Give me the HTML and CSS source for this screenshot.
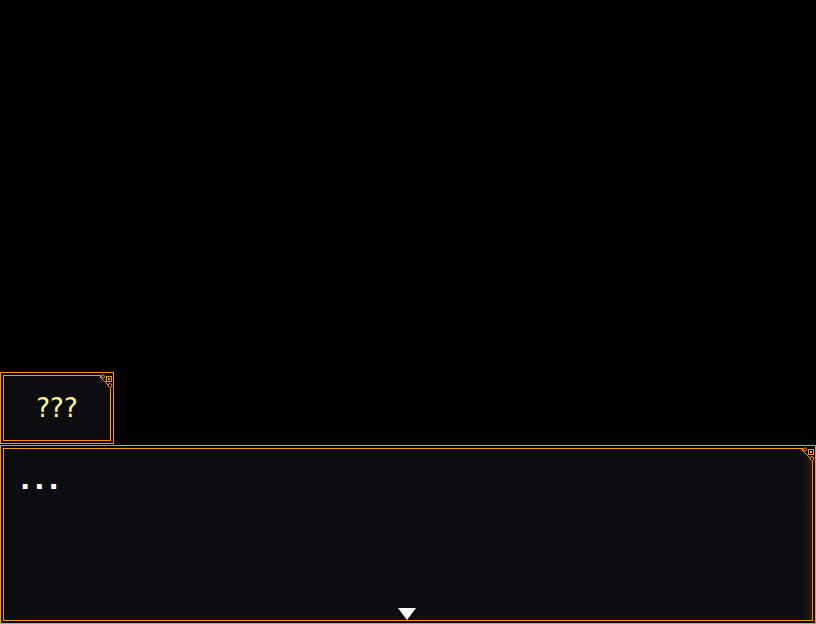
FILE: index.html
```html
<!DOCTYPE html>
<html>
<head>
<meta charset="utf-8">
<link rel="stylesheet" href="styles.css">
</head>
<body>
<div class="screen">
  <div class="frame namebox">
    <div class="panel name-panel">
      <span class="name">???</span>
      <svg class="orn" width="16" height="17" viewBox="0 0 16 17" shape-rendering="crispEdges">
        <polygon points="4,0 16,0 16,15 12,15 3,3" fill="#000"/>
        <g fill="#ff9900">
          <rect x="2" y="1" width="2" height="1"/>
          <rect x="3" y="2" width="1" height="2"/>
          <rect x="4" y="4" width="1" height="1"/>
          <rect x="5" y="5" width="1" height="1"/>
          <rect x="6" y="6" width="1" height="1"/>
          <rect x="7" y="7" width="1" height="1"/>
          <rect x="8" y="8" width="1" height="1"/>
          <rect x="9" y="9" width="1" height="1"/>
          <rect x="10" y="10" width="1" height="1"/>
          <rect x="11" y="4" width="2" height="2"/>
          <rect x="13" y="14" width="1" height="3"/>
        </g>
        <circle cx="6" cy="2.5" r="1.6" fill="none" stroke="#ff9900" shape-rendering="auto"/>
        <rect x="9.5" y="2.5" width="5" height="5" fill="none" stroke="#ff9900"/>
        <circle cx="13" cy="11.5" r="1.9" fill="none" stroke="#ff9900" shape-rendering="auto"/>
      </svg>
    </div>
  </div>
  <div class="frame msgbox">
    <div class="panel msg-panel">
      <p class="msg">...</p>
      <svg class="orn" width="16" height="17" viewBox="0 0 16 17" shape-rendering="crispEdges">
        <polygon points="4,0 16,0 16,15 12,15 3,3" fill="#000"/>
        <g fill="#ff9900">
          <rect x="2" y="1" width="2" height="1"/>
          <rect x="3" y="2" width="1" height="2"/>
          <rect x="4" y="4" width="1" height="1"/>
          <rect x="5" y="5" width="1" height="1"/>
          <rect x="6" y="6" width="1" height="1"/>
          <rect x="7" y="7" width="1" height="1"/>
          <rect x="8" y="8" width="1" height="1"/>
          <rect x="9" y="9" width="1" height="1"/>
          <rect x="10" y="10" width="1" height="1"/>
          <rect x="11" y="4" width="2" height="2"/>
          <rect x="13" y="14" width="1" height="3"/>
        </g>
        <circle cx="6" cy="2.5" r="1.6" fill="none" stroke="#ff9900" shape-rendering="auto"/>
        <rect x="9.5" y="2.5" width="5" height="5" fill="none" stroke="#ff9900"/>
        <circle cx="13" cy="11.5" r="1.9" fill="none" stroke="#ff9900" shape-rendering="auto"/>
      </svg>
      <span class="next"></span>
    </div>
  </div>
</div>
</body>
</html>
```
FILE: styles.css
```css
html, body {
  margin: 0;
  padding: 0;
  background: #000;
}
.screen {
  width: 816px;
  height: 624px;
  display: flex;
  flex-direction: column;
  justify-content: flex-end;
  gap: 1px;
  font-family: "DejaVu Sans", sans-serif;
}
.frame {
  box-sizing: border-box;
  border: 1px solid #ff9900;
  padding: 2px;
  background: #000;
  display: flex;
  flex-shrink: 0;
}
.panel {
  position: relative;
  flex: 1;
  box-sizing: border-box;
  border: 1px solid #ff9900;
  background: #0d0d11;
}
.namebox {
  width: 114px;
  height: 72px;
}
.name-panel {
  display: flex;
  align-items: center;
  justify-content: center;
}
.name {
  color: #ffff9c;
  font-size: 26px;
  line-height: 30px;
}
.msgbox {
  width: 816px;
  height: 179px;
}
.msg-panel {
  padding: 16px 0 0 16px;
  background: linear-gradient(to right, #0d0d11 calc(100% - 9px), #2a1d08);
}
.msg {
  margin: 0;
  color: #fff;
  font-size: 27px;
  font-weight: bold;
  line-height: 30px;
  letter-spacing: 4px;
  -webkit-font-smoothing: antialiased;
}
.orn {
  position: absolute;
  top: -2px;
  right: -3px;
  display: block;
}
.next {
  position: absolute;
  bottom: 0;
  left: 50%;
  margin-left: -10px;
  width: 0;
  height: 0;
  border-left: 9.5px solid transparent;
  border-right: 9.5px solid transparent;
  border-top: 12px solid #fff;
}
```
